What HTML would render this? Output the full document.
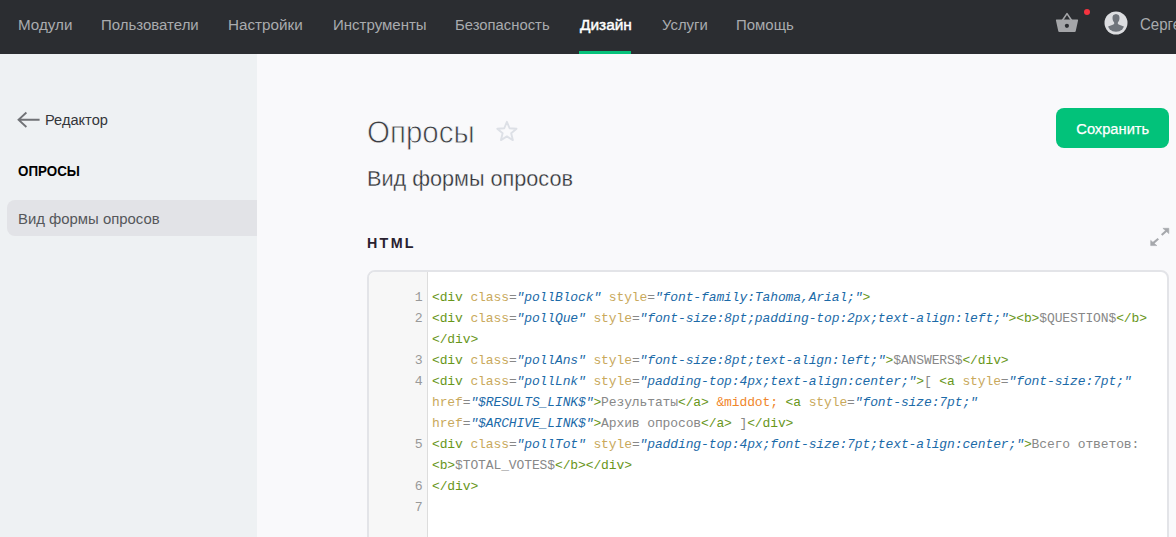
<!DOCTYPE html>
<html><head><meta charset="utf-8">
<style>
*{box-sizing:border-box;margin:0;padding:0}
html,body{width:1176px;height:537px;overflow:hidden;background:#f9f9fb;font-family:"Liberation Sans",sans-serif;}
.abs{position:absolute;white-space:nowrap;}
#top{position:absolute;left:0;top:0;width:1176px;height:54px;background:#2b2d31;}
#top .n{position:absolute;top:0.13px;height:49px;line-height:49px;font-size:15.5px;transform-origin:0 50%;color:#a9abae;white-space:nowrap;}
#top .n.act{color:#fff;-webkit-text-stroke:0.45px #fff;}
#side{position:absolute;left:0;top:54px;width:257px;height:483px;background:#eef1f3;}
#sel{position:absolute;left:7px;top:200px;width:250px;height:36px;background:#e2e3e7;border-radius:8px 0 0 8px;}
#btn{position:absolute;left:1056px;top:108px;width:113px;height:40px;background:#02c27a;border-radius:8px;color:#fff;font-size:15.2px;line-height:41.4px;text-align:center;}#btn span{display:inline-block;transform:scaleX(0.966);-webkit-text-stroke:0.25px #fff}
#box{position:absolute;left:367px;top:270px;width:802px;height:300px;border:2px solid #e3e4e8;border-radius:8px;background:#fff;overflow:hidden;}
#gut{position:absolute;left:0;top:0;width:59px;height:300px;background:#f7f7f7;border-right:1px solid #ddd;}
.ln{position:absolute;left:0;width:53.6px;margin-top:1px;text-align:right;font-family:"Liberation Mono",monospace;font-size:13.2px;color:#999;line-height:21px;height:21px;}
.cl{position:absolute;left:63px;margin-top:1px;font-family:"Liberation Mono",monospace;font-size:13px;letter-spacing:-0.115px;line-height:21px;height:21px;white-space:pre;color:#888;}
.t{color:#68961a}.a{color:#c9a95c}.s{color:#1b6aa8;font-style:italic}.e{color:#f0862a}.p{color:#888}
</style></head><body>
<div id="top">
<span class="n" style="left:17.5px;transform:scaleX(0.980)">Модули</span>
<span class="n" style="left:101px;transform:scaleX(0.966)">Пользователи</span>
<span class="n" style="left:228px;transform:scaleX(0.983)">Настройки</span>
<span class="n" style="left:333px;transform:scaleX(0.969)">Инструменты</span>
<span class="n" style="left:455px;transform:scaleX(0.957)">Безопасность</span>
<span class="n act" style="left:579.8px;transform:scaleX(0.996)">Дизайн</span>
<span class="n" style="left:662px;transform:scaleX(0.960)">Услуги</span>
<span class="n" style="left:736px;transform:scaleX(0.964)">Помощь</span>
<div class="abs" style="left:579px;top:51px;width:52px;height:3px;background:#06c17a"></div>
<svg class="abs" style="left:1054px;top:10px" width="26" height="24" viewBox="0 0 26 24"><path d="M2.6 9.4 H23.4 Q24.3 9.4 24.1 10.3 L21.7 21.2 Q21.5 22 20.7 22 H5.3 Q4.5 22 4.3 21.2 L1.9 10.3 Q1.7 9.4 2.6 9.4 Z" fill="#a4a5a8"/><path d="M8.3 10.5 L13 3.6 L17.7 10.5" fill="none" stroke="#a4a5a8" stroke-width="1.6" stroke-linejoin="round"/><circle cx="12.9" cy="15.8" r="2.1" fill="#2b2d31"/></svg>
<div class="abs" style="left:1084px;top:9px;width:6px;height:6px;border-radius:3px;background:#f5333f"></div>
<svg class="abs" style="left:1104.4px;top:10.8px" width="24" height="24" viewBox="0 0 24 24"><defs><clipPath id="cp"><circle cx="12" cy="12" r="8.7"/></clipPath></defs><circle cx="12" cy="12" r="11.5" fill="#dcdde0"/><g clip-path="url(#cp)" fill="#6f747b" transform="translate(12 12) scale(1.03) translate(-12 -12.1)"><path d="M12 3.4 C14.2 3.4 15.4 5 15.4 7.2 C15.4 9 14.8 10.6 13.8 11.5 L13.8 13 C15 14.2 19 14.6 20.5 16.2 L21 22 H3 L3.5 16.2 C5 14.6 9 14.2 10.2 13 L10.2 11.5 C9.2 10.6 8.6 9 8.6 7.2 C8.6 5 9.8 3.4 12 3.4 Z"/></g></svg>
<span class="n" style="left:1140px;top:-0.2px;font-size:16px;color:#a9abae;transform:scaleX(0.939)">Сергей</span>
</div>
<div id="side"></div>
<div id="sel"></div>
<svg class="abs" style="left:17px;top:111px" width="24" height="18" viewBox="0 0 24 18"><path d="M9.4 1.5 L1.5 8.75 L9.4 16 M1.5 8.75 H22.6" fill="none" stroke="#707276" stroke-width="1.8" stroke-linejoin="miter"/></svg>
<span class="abs" style="left:45px;top:111.0px;font-size:15.2px;line-height:18px;color:#34363a;transform-origin:0 50%;transform:scaleX(0.962)">Редактор</span>
<span class="abs" style="left:17.7px;top:161.6px;font-size:14.3px;line-height:18px;font-weight:bold;color:#000;transform-origin:0 50%;transform:scaleX(0.935)">ОПРОСЫ</span>
<span class="abs" style="left:17.6px;top:210px;font-size:15.2px;line-height:18px;color:#55575b;transform-origin:0 50%;transform:scaleX(0.98)">Вид формы опросов</span>

<span class="abs" style="left:367px;top:113.9px;font-size:32px;line-height:36px;color:#3c3e42;-webkit-text-stroke:0.8px #f9f9fb;transform-origin:0 50%;transform:scaleX(0.922)">Опросы</span>
<svg class="abs" style="left:495px;top:120px" width="24" height="24" viewBox="0 0 24 24"><path d="M11.90 1.80 L14.55 8.26 L21.51 8.78 L16.18 13.29 L17.84 20.07 L11.90 16.40 L5.96 20.07 L7.62 13.29 L2.29 8.78 L9.25 8.26 Z" fill="none" stroke="#dde0e6" stroke-width="1.9" stroke-linejoin="round"/></svg>
<span class="abs" style="left:367px;top:165.8px;font-size:21.15px;line-height:26px;color:#303236;-webkit-text-stroke:0.3px #f9f9fb;transform-origin:0 50%;transform:scaleX(1.024)">Вид формы опросов</span>
<span class="abs" style="left:367px;top:233.9px;font-size:14.3px;line-height:18px;font-weight:bold;letter-spacing:2.3px;color:#2a2230">HTML</span>
<div id="btn"><span>Сохранить</span></div>
<svg class="abs" style="left:1150px;top:227px" width="20" height="20" viewBox="0 0 20 20"><g fill="#a6a8ac" stroke="#a6a8ac"><path d="M12.9 1.3 H18.8 V6.6 Z" stroke-width="0.6" stroke-linejoin="miter"/><path d="M17 3.2 L11.7 8.1" stroke-width="2.1" fill="none"/><path d="M0.7 13.4 V18.6 H6.8 Z" stroke-width="0.6"/><path d="M2.6 16.6 L8.3 11.8" stroke-width="2.1" fill="none"/></g></svg>

<div id="box">
<div id="gut"></div>
<div class="ln" style="top:14px">1</div>
<div class="ln" style="top:35px">2</div>
<div class="ln" style="top:77px">3</div>
<div class="ln" style="top:98px">4</div>
<div class="ln" style="top:161px">5</div>
<div class="ln" style="top:203px">6</div>
<div class="ln" style="top:224px">7</div>
<div class="cl" style="top:14px"><span class="t">&lt;div</span> <span class="a">class</span>=<span class="s">"pollBlock"</span> <span class="a">style</span>=<span class="s">"font-family:Tahoma,Arial;"</span><span class="t">&gt;</span></div>
<div class="cl" style="top:35px"><span class="t">&lt;div</span> <span class="a">class</span>=<span class="s">"pollQue"</span> <span class="a">style</span>=<span class="s">"font-size:8pt;padding-top:2px;text-align:left;"</span><span class="t">&gt;&lt;b&gt;</span>$QUESTION$<span class="t">&lt;/b&gt;</span></div>
<div class="cl" style="top:56px"><span class="t">&lt;/div&gt;</span></div>
<div class="cl" style="top:77px"><span class="t">&lt;div</span> <span class="a">class</span>=<span class="s">"pollAns"</span> <span class="a">style</span>=<span class="s">"font-size:8pt;text-align:left;"</span><span class="t">&gt;</span>$ANSWERS$<span class="t">&lt;/div&gt;</span></div>
<div class="cl" style="top:98px"><span class="t">&lt;div</span> <span class="a">class</span>=<span class="s">"pollLnk"</span> <span class="a">style</span>=<span class="s">"padding-top:4px;text-align:center;"</span><span class="t">&gt;</span>[ <span class="t">&lt;a</span> <span class="a">style</span>=<span class="s">"font-size:7pt;"</span></div>
<div class="cl" style="top:119px"><span class="a">href</span>=<span class="s">"$RESULTS_LINK$"</span><span class="t">&gt;</span>Результаты<span class="t">&lt;/a&gt;</span> <span class="e">&amp;middot;</span> <span class="t">&lt;a</span> <span class="a">style</span>=<span class="s">"font-size:7pt;"</span></div>
<div class="cl" style="top:140px"><span class="a">href</span>=<span class="s">"$ARCHIVE_LINK$"</span><span class="t">&gt;</span>Архив опросов<span class="t">&lt;/a&gt;</span> ]<span class="t">&lt;/div&gt;</span></div>
<div class="cl" style="top:161px"><span class="t">&lt;div</span> <span class="a">class</span>=<span class="s">"pollTot"</span> <span class="a">style</span>=<span class="s">"padding-top:4px;font-size:7pt;text-align:center;"</span><span class="t">&gt;</span>Всего ответов:</div>
<div class="cl" style="top:182px"><span class="t">&lt;b&gt;</span>$TOTAL_VOTES$<span class="t">&lt;/b&gt;&lt;/div&gt;</span></div>
<div class="cl" style="top:203px"><span class="t">&lt;/div&gt;</span></div>
</div>
</body></html>
